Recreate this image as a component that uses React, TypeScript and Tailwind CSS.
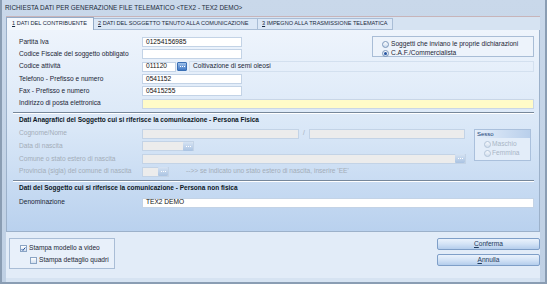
import React from "react";

function Input({
  value,
  className = "",
  tone = "white",
  dots = false,
}: {
  value?: string;
  className?: string;
  tone?: "white" | "yellow" | "off";
  dots?: boolean;
}) {
  const bg =
    tone === "yellow"
      ? "bg-[#fffbc8] border-[#c9d6e6]"
      : tone === "off"
        ? "bg-[#ececec] border-[#c3d3e6]"
        : "bg-white border-[#c3d3e6]";
  return (
    <div className={`flex h-[10px] items-center border ${bg} ${className}`}>
      <span className="flex-1 truncate pl-[3px] text-[#111]">{value}</span>
      {dots && <DotsButton off />}
    </div>
  );
}

function DotsButton({ off = false }: { off?: boolean }) {
  return (
    <div
      className={`flex h-[9px] w-[10px] items-center justify-center gap-[1px] rounded-[1px] ${
        off
          ? "bg-gradient-to-b from-[#d6e3f3] to-[#aac3e2]"
          : "bg-gradient-to-b from-[#9fc1ea] to-[#3f78c4] border border-[#3a6fb5]"
      }`}
    >
      <span className="h-[1px] w-[1px] bg-white" />
      <span className="h-[1px] w-[1px] bg-white" />
      <span className="h-[1px] w-[1px] bg-white" />
    </div>
  );
}

function Row({
  label,
  off = false,
  children,
}: {
  label: string;
  off?: boolean;
  children: React.ReactNode;
}) {
  return (
    <div className="flex h-[10px] items-center">
      <span className={`w-[123px] shrink-0 whitespace-nowrap ${off ? "text-[#a3adb8]" : "text-[#1b2636]"}`}>
        {label}
      </span>
      {children}
    </div>
  );
}

function Radio({ checked = false, off = false }: { checked?: boolean; off?: boolean }) {
  return (
    <span
      className={`flex h-[7px] w-[7px] shrink-0 items-center justify-center rounded-full border ${
        off
          ? "border-[#b3c4d8] bg-gradient-to-b from-[#f5f8fc] to-[#d2dfee]"
          : "border-[#7c97ba] bg-gradient-to-b from-[#ffffff] to-[#c9d9ec]"
      }`}
    >
      {checked && <span className="h-[3px] w-[3px] rounded-full bg-[#2453a0]" />}
    </span>
  );
}

function Check({ checked = false }: { checked?: boolean }) {
  return (
    <span className="flex h-[7px] w-[7px] shrink-0 items-center justify-center border border-[#8aa4c4] bg-gradient-to-b from-[#ffffff] to-[#d3e0ef]">
      {checked && (
        <svg width="6" height="6" viewBox="0 0 6 6">
          <path d="M0.8 3.2 L2.3 4.7 L5.2 1.2" stroke="#1f4f9a" strokeWidth="1.2" fill="none" />
        </svg>
      )}
    </span>
  );
}

function SectionHeader({ title }: { title: string }) {
  return (
    <div className="-ml-[6px] h-[16px] whitespace-nowrap border-t border-[#76879a] pl-[6px] pt-[4px] text-[6.5px] font-bold text-[#0d1724] shadow-[inset_0_1px_0_#ffffff]">
      {title}
    </div>
  );
}

function WinButton({ first, rest }: { first: string; rest: string }) {
  return (
    <div className="flex h-[12px] w-[103px] items-center justify-center rounded-[2px] border border-[#7f9fc8] bg-gradient-to-b from-[#eaf2fc] via-[#d3e3f6] to-[#b4cdec] text-[#1e395b]">
      <span className="underline">{first}</span>
      {rest}
    </div>
  );
}

export default function App() {
  return (
    <div className="flex h-[284px] w-[547px] flex-col overflow-hidden border-l-[2px] border-r-[2px] border-b-[2px] border-[#8a9db3] bg-gradient-to-b from-[#c9d8ea] to-[#bfd0e4] font-['Liberation_Sans',sans-serif] text-[6.6px] leading-none">
      {/* TITLE BAR */}
      <div className="flex h-[16px] shrink-0 items-center whitespace-nowrap pl-[3px] text-[6.4px] text-[#1c2a3a]">
        RICHIESTA DATI PER GENERAZIONE FILE TELEMATICO &lt;TEX2 - TEX2 DEMO&gt;
      </div>

      {/* CLIENT */}
      <div className="ml-[4px] mr-[5px] flex flex-1 flex-col border-t border-[#c7b4b9] bg-[#d6e3f2]">
        {/* TABS */}
        <div className="flex h-[13px] shrink-0 items-end whitespace-nowrap text-[5.6px] text-[#1b2a40]">
          <div className="flex h-[13px] w-[88px] items-center border border-b-0 border-[#94abc7] bg-[#f4f8fd] pl-[5px]">
            <span className="underline">1</span>&nbsp;DATI DEL CONTRIBUENTE
          </div>
          <div className="flex h-[12px] w-[164px] items-center border-y border-r border-[#a9bdd6] bg-[#dbe7f6] pl-[4px]">
            <span className="underline">2</span>&nbsp;DATI DEL SOGGETTO TENUTO ALLA COMUNICAZIONE
          </div>
          <div className="flex h-[12px] w-[135px] items-center border-y border-r border-[#a9bdd6] bg-[#dbe7f6] pl-[4px]">
            <span className="underline">3</span>&nbsp;IMPEGNO ALLA TRASMISSIONE TELEMATICA
          </div>
        </div>

        {/* TAB PAGE */}
        <div className="flex h-[202px] shrink-0 flex-col border border-t-0 border-[#9cb1ca] bg-gradient-to-b from-[#eef4fc] via-[#d9e7f7] to-[#b9d1ee] pl-[12px] pr-[4px] pt-[7px]">
          {/* FIRST ROWS + TIPO SOGGETTO */}
          <div className="flex items-start justify-between">
            <div className="flex flex-col gap-[2.33px]">
              <Row label="Partita Iva">
                <Input value="01254156985" className="w-[100px]" />
              </Row>
              <Row label="Codice Fiscale del soggetto obbligato">
                <Input className="w-[100px]" />
              </Row>
            </div>
            <div className="-mt-[1px] mr-[1px] flex h-[21px] w-[162px] flex-col gap-[2px] whitespace-nowrap border border-[#a9bdd6] bg-[#edf3fb] pl-[9px] pt-[4px] text-[#1b2636]">
              <div className="flex items-center gap-[2px]">
                <Radio />
                <span>Soggetti che inviano le proprie dichiarazioni</span>
              </div>
              <div className="flex items-center gap-[2px]">
                <Radio checked />
                <span>C.A.F./Commercialista</span>
              </div>
            </div>
          </div>

          <div className="mt-[2.33px] flex flex-col gap-[2.33px] pr-[1px]">
            <Row label="Codice attività">
              <Input value="011120" className="w-[34px]" />
              <div className="ml-[1px]">
                <DotsButton />
              </div>
              <div className="ml-[2px] h-[11px] flex-1 border border-[#d3e0ef] pl-[3px] pt-[1px] text-[#1b2636]">
                Coltivazione di semi oleosi
              </div>
            </Row>
            <Row label="Telefono - Prefisso e numero">
              <Input value="0541152" className="w-[100px]" />
            </Row>
            <Row label="Fax - Prefisso e numero">
              <Input value="05415255" className="w-[100px]" />
            </Row>
            <Row label="Indirizzo di posta elettronica">
              <Input tone="yellow" className="flex-1" />
            </Row>
          </div>

          {/* PERSONA FISICA */}
          <div className="mt-[3px] pr-[1px]">
            <SectionHeader title="Dati Anagrafici del Soggetto cui si riferisce la comunicazione - Persona Fisica" />
          </div>
          <div className="mt-[1px] flex items-start">
            <div className="flex w-[447px] flex-col gap-[2.67px]">
              <Row label="Cognome/Nome" off>
                <Input tone="off" className="w-[157px]" />
                <span className="w-[10px] text-center text-[#a3adb8]">/</span>
                <Input tone="off" className="w-[156px]" />
              </Row>
              <Row label="Data di nascita" off>
                <Input tone="off" dots className="w-[52px]" />
              </Row>
              <Row label="Comune o stato estero di nascita" off>
                <Input tone="off" dots className="w-[324px]" />
              </Row>
              <Row label="Provincia (sigla) del comune di nascita" off>
                <Input tone="off" dots className="w-[27px]" />
                <span className="ml-[17px] whitespace-nowrap text-[#a3adb8]">
                  --&gt;&gt; se indicato uno stato estero di nascita, inserire 'EE'
                </span>
              </Row>
            </div>
            <div className="ml-[8px] flex h-[32px] w-[57px] flex-col border border-[#aac0dc] bg-[#e3edf9]">
              <div className="flex h-[8px] items-center bg-gradient-to-r from-[#e4eefa] to-[#b9cfeb] pl-[2px] text-[6px] text-[#173d74]">
                Sesso
              </div>
              <div className="flex flex-col gap-[2px] pl-[9px] pt-[3px] text-[#a9b6c6]">
                <div className="flex items-center gap-[1px]">
                  <Radio off />
                  <span>Maschio</span>
                </div>
                <div className="flex items-center gap-[1px]">
                  <Radio off />
                  <span>Femmina</span>
                </div>
              </div>
            </div>
          </div>

          {/* PERSONA NON FISICA */}
          <div className="mt-[3px] pr-[1px]">
            <SectionHeader title="Dati del Soggetto cui si riferisce la comunicazione - Persona non fisica" />
          </div>
          <div className="mt-[2px] pr-[1px]">
            <Row label="Denominazione">
              <Input value="TEX2 DEMO" className="flex-1" />
            </Row>
          </div>
        </div>

        {/* BOTTOM BAR */}
        <div className="flex h-[46px] shrink-0 items-start justify-between bg-[#e2ecf8] pl-[3px] pt-[6px]">
          <div className="flex h-[31px] w-[106px] flex-col gap-[5px] whitespace-nowrap border border-[#a9bdd6] bg-[#e8f0fa] pl-[10px] pt-[6px] text-[#1b2636]">
            <div className="flex items-center gap-[2px]">
              <Check checked />
              <span>Stampa modello a video</span>
            </div>
            <div className="ml-[10px] flex items-center gap-[2px]">
              <Check />
              <span>Stampa dettaglio quadri</span>
            </div>
          </div>
          <div className="flex flex-col gap-[4px]">
            <WinButton first="C" rest="onferma" />
            <WinButton first="A" rest="nnulla" />
          </div>
        </div>
      </div>
    </div>
  );
}
